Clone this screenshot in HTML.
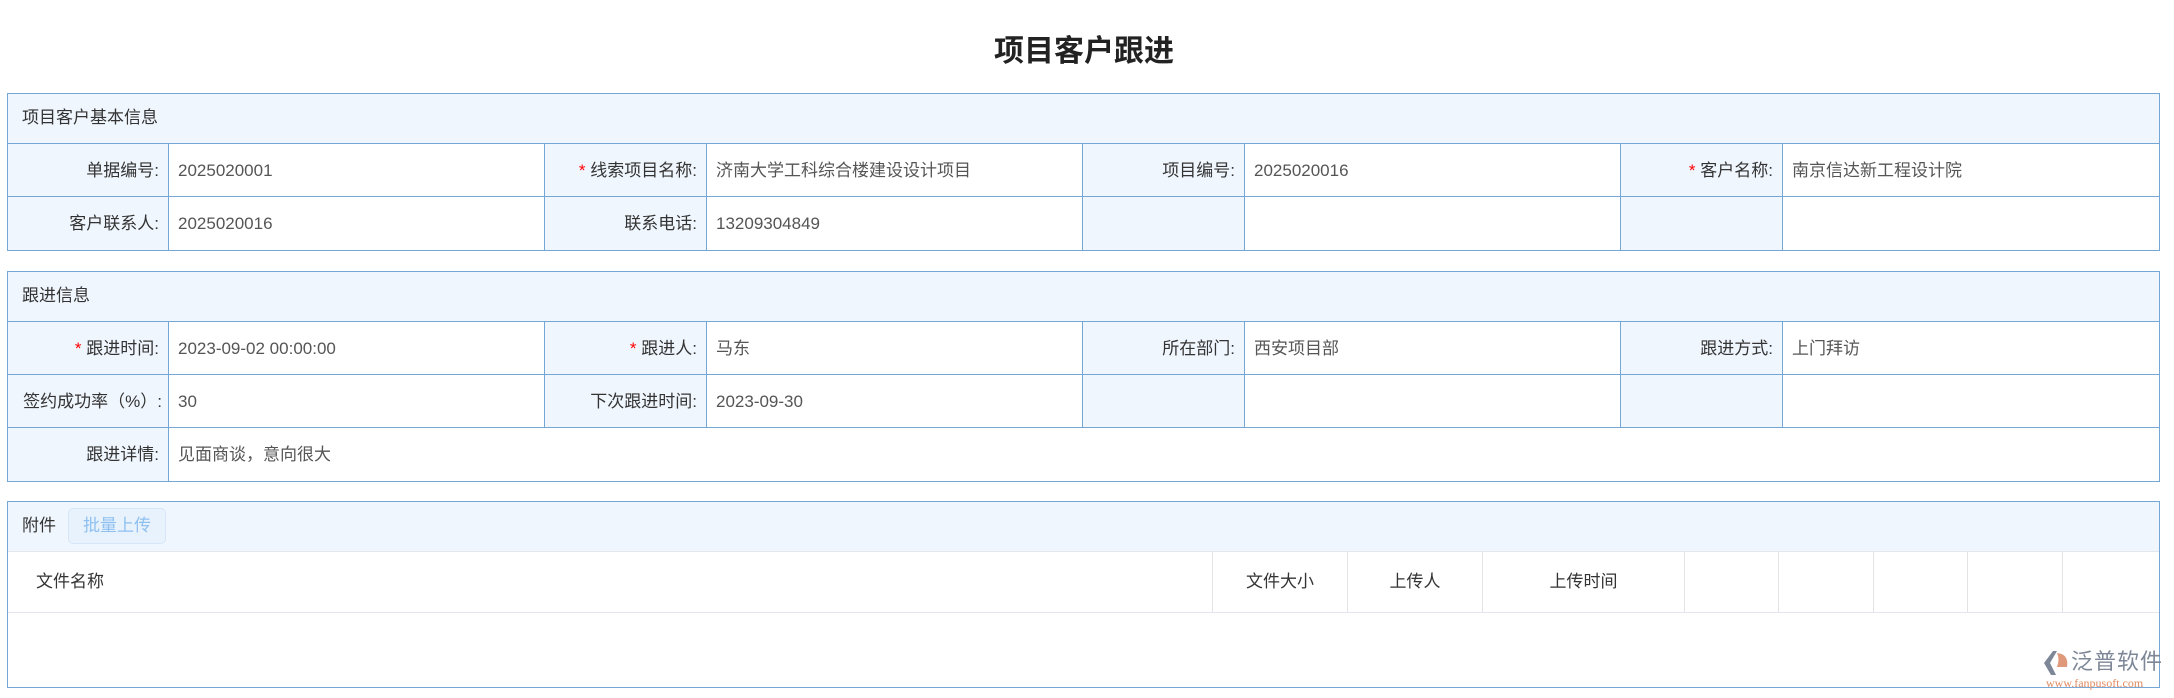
<!DOCTYPE html>
<html><head><meta charset="utf-8"><style>
*{margin:0;padding:0;box-sizing:border-box}
body{width:2174px;height:698px;background:#fff;position:relative;overflow:hidden;font-family:"Liberation Sans","Noto Sans CJK SC",sans-serif;font-size:17px;color:#333}
.a{position:absolute}
.title{left:0;width:2168px;top:28px;text-align:center;font-size:30px;font-weight:bold;color:#222;line-height:48px}
.frame{position:absolute;left:7px;width:2153px;border:1.5px solid #74a7d6}
.hd{position:absolute;left:0;right:0;top:0;height:50px;background:#f0f6fe;border-bottom:1.5px solid #74a7d6;line-height:48px;padding-left:14px;font-size:17px;color:#333}
.c{position:absolute;height:53px;line-height:53px;border-bottom:1px solid #74a7d6;border-right:1px solid #74a7d6;white-space:nowrap;overflow:hidden}
.l{background:#f0f6fe;text-align:right;padding-right:9px;color:#333}
.v{background:#fff;padding-left:9px;color:#555}
.r{color:#f00}
.th{position:absolute;top:0;height:60px;line-height:60px;border-right:1px solid #e3e3e3;text-align:center;color:#333}
</style></head><body>
<div class="a title">项目客户跟进</div>

<div class="frame" style="top:93px;height:158px">
<div class="hd">项目客户基本信息</div>
</div>
<div class="c l" style="left:8px;top:144px;width:161px">单据编号:</div>
<div class="c v" style="left:169px;top:144px;width:376px">2025020001</div>
<div class="c l" style="left:545px;top:144px;width:162px"><span class="r">*</span> 线索项目名称:</div>
<div class="c v" style="left:707px;top:144px;width:376px">济南大学工科综合楼建设设计项目</div>
<div class="c l" style="left:1083px;top:144px;width:162px">项目编号:</div>
<div class="c v" style="left:1245px;top:144px;width:376px">2025020016</div>
<div class="c l" style="left:1621px;top:144px;width:162px"><span class="r">*</span> 客户名称:</div>
<div class="c v" style="left:1783px;top:144px;width:376px;border-right:none">南京信达新工程设计院</div>
<div class="c l" style="left:8px;top:197px;width:161px;border-bottom:none">客户联系人:</div>
<div class="c v" style="left:169px;top:197px;width:376px;border-bottom:none">2025020016</div>
<div class="c l" style="left:545px;top:197px;width:162px;border-bottom:none">联系电话:</div>
<div class="c v" style="left:707px;top:197px;width:376px;border-bottom:none">13209304849</div>
<div class="c l" style="left:1083px;top:197px;width:162px;border-bottom:none"></div>
<div class="c v" style="left:1245px;top:197px;width:376px;border-bottom:none"></div>
<div class="c l" style="left:1621px;top:197px;width:162px;border-bottom:none"></div>
<div class="c v" style="left:1783px;top:197px;width:376px;border:none"></div>

<div class="frame" style="top:271px;height:211px">
<div class="hd">跟进信息</div>
</div>
<div class="c l" style="left:8px;top:322px;width:161px"><span class="r">*</span> 跟进时间:</div>
<div class="c v" style="left:169px;top:322px;width:376px">2023-09-02 00:00:00</div>
<div class="c l" style="left:545px;top:322px;width:162px"><span class="r">*</span> 跟进人:</div>
<div class="c v" style="left:707px;top:322px;width:376px">马东</div>
<div class="c l" style="left:1083px;top:322px;width:162px">所在部门:</div>
<div class="c v" style="left:1245px;top:322px;width:376px">西安项目部</div>
<div class="c l" style="left:1621px;top:322px;width:162px">跟进方式:</div>
<div class="c v" style="left:1783px;top:322px;width:376px;border-right:none">上门拜访</div>
<div class="c l" style="left:8px;top:375px;width:161px;padding-right:6px">签约成功率（%）:</div>
<div class="c v" style="left:169px;top:375px;width:376px">30</div>
<div class="c l" style="left:545px;top:375px;width:162px">下次跟进时间:</div>
<div class="c v" style="left:707px;top:375px;width:376px">2023-09-30</div>
<div class="c l" style="left:1083px;top:375px;width:162px"></div>
<div class="c v" style="left:1245px;top:375px;width:376px"></div>
<div class="c l" style="left:1621px;top:375px;width:162px"></div>
<div class="c v" style="left:1783px;top:375px;width:376px;border-right:none"></div>
<div class="c l" style="left:8px;top:428px;width:161px;border-bottom:none">跟进详情:</div>
<div class="c v" style="left:169px;top:428px;width:1990px;border:none">见面商谈，意向很大</div>

<div class="frame" style="top:501px;height:187px">
<div class="hd" style="border-bottom:1.5px solid #e3e6ea;padding-left:14px">附件</div>
<div class="a" style="left:60px;top:6px;width:98px;height:36px;border:1px solid #d6e6f8;background:#e8f2fd;border-radius:5px;color:#8ec0f0;text-align:center;line-height:34px">批量上传</div>
<div style="position:absolute;left:0;right:0;top:50px;height:61px;border-bottom:1.5px solid #e3e6ea">
<div class="th" style="left:0;width:1205px;text-align:left;padding-left:28px">文件名称</div>
<div class="th" style="left:1205px;width:135px">文件大小</div>
<div class="th" style="left:1340px;width:135px">上传人</div>
<div class="th" style="left:1475px;width:202px">上传时间</div>
<div class="th" style="left:1677px;width:94px"></div>
<div class="th" style="left:1771px;width:95px"></div>
<div class="th" style="left:1866px;width:94px"></div>
<div class="th" style="left:1960px;width:95px"></div>
</div>
</div>

<svg class="a" style="left:2042px;top:650px" width="30" height="26" viewBox="0 0 30 26"><path d="M11 1 L2 13 L9 25 L14 25 L8 13 L15 1Z" fill="#7d8797"/><path d="M15 3 Q27 4 25 17 L15 17 Q18 9 15 3Z" fill="#e0987a"/></svg>
<div class="a" style="left:2071px;top:647px;font-size:22px;color:#7d8797;letter-spacing:1px;line-height:30px">泛普软件</div>
<div class="a" style="left:2046px;top:676px;font-size:12px;color:#e08a60;font-family:'Liberation Serif',serif;line-height:14px">www.fanpusoft.com</div>
</body></html>
